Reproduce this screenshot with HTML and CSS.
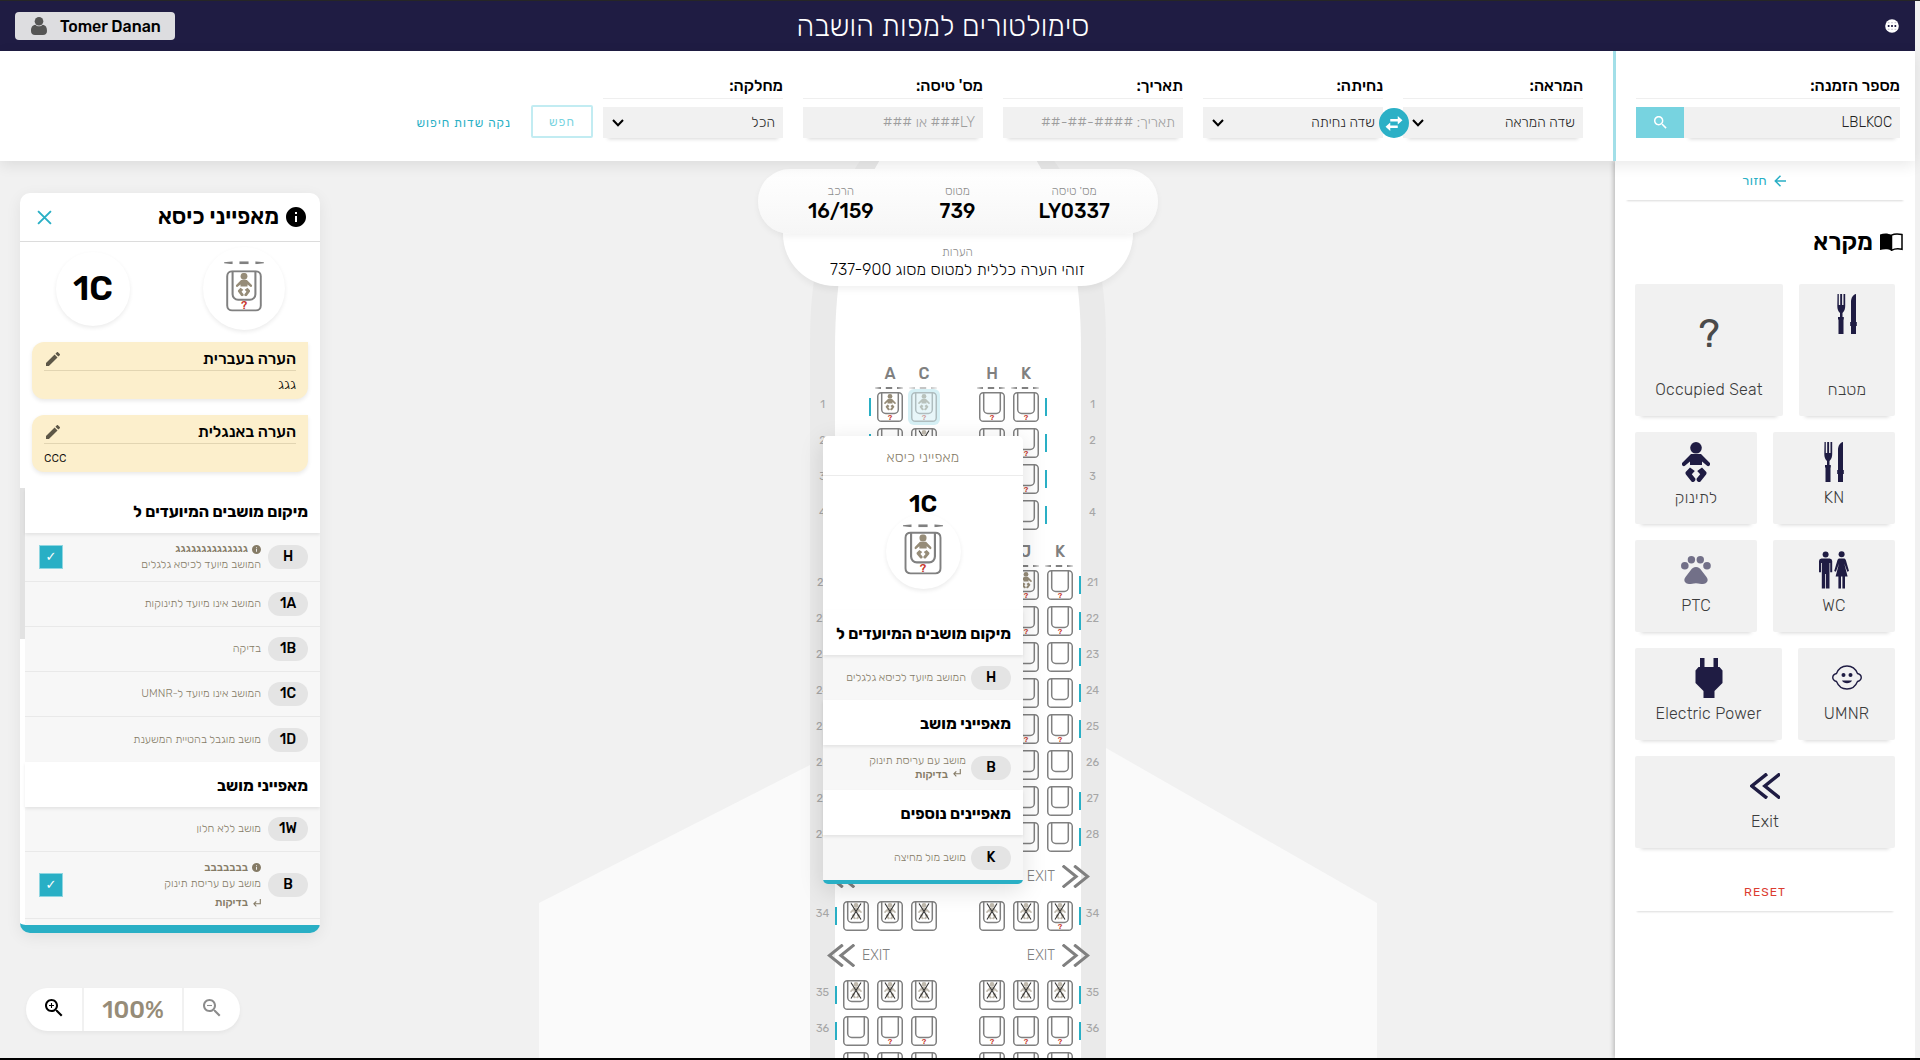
FILE: index.html
```html
<!DOCTYPE html>
<html lang="he" dir="rtl">
<head>
<meta charset="utf-8">
<title>סימולטורים למפות הושבה</title>
<link rel="stylesheet" href="styles.css">
</head>
<body>
<svg class="defs" width="0" height="0">
  <symbol id="i-baby" viewBox="0 0 28 40"><circle cx="14" cy="5.8" r="5.8"/><path d="M9 12h10l8.4 8.6a1.9 1.9 0 0 1-2.6 3L20 19.6V23H8v-3.4l-4.800 4a1.900 1.900 0 0 1-2.600-3z"/><path d="M8 25.500l4.800 3.400-3 3.300 3.500 4.200c.8 1.800-1.500 4.600-3.600 3.300l-5.800-7.300c-.6-1-.6-1.800 0-2.600zM20 25.500l-4.800 3.400 3 3.300-3.500 4.200c-.8 1.800 1.500 4.600 3.600 3.300l5.800-7.300c.6-1 .6-1.800 0-2.600z"/></symbol>
  <symbol id="i-fork" viewBox="0 0 20 40"><path d="M.5 0h1.300v11H3.200V0h1.900v11h1.400V0h1.700v12c0 3-.8 5-2.700 7v4h1.300v2.500H6.500V40h-5V25.500H1V23h2v-4C1.200 17.500.3 15 .3 12zM19 0v28h.8v4H19v8h-5v-8h-.8v-4h.8V8c0-4 2-7.500 5-8z"/></symbol>
  <symbol id="i-wc" viewBox="0 0 30 38"><circle cx="6.600" cy="3.500" r="3"/><path d="M2.800 7.500h7.800A2.600 2.600 0 0 1 13.200 10v11.300h-2V12h-.7v25.500H7V23h-.8v14.500H2.800V12H2v9.300H0V10a2.600 2.600 0 0 1 2.800-2.500z"/><circle cx="22.600" cy="3.300" r="3"/><path d="M20.600 7.500h4c1.200 0 1.900.6 2.300 1.700L30 20l-1.700.7-3-8.200 3.300 13H26v12h-2.600v-12h-1.400v12h-2.600v-12h-2.800l3.400-13-3.100 8.200L15.200 20l3.200-10.800c.4-1.100 1.100-1.700 2.200-1.700z"/></symbol>
  <symbol id="i-paw" viewBox="0 0 30 28"><circle cx="3.800" cy="9.700" r="3.800"/><circle cx="10.400" cy="3.700" r="3.700"/><circle cx="19.300" cy="3.700" r="3.700"/><circle cx="26" cy="9.700" r="3.800"/><path d="M15 11c2.500 0 4 1.500 5.500 3.500l5 6.500c3 4-.5 7-3.500 7-2.500 0-4-.8-7-.8s-4.500.8-7 .8c-3 0-6.500-3-3.500-7l5-6.500C11 12.500 12.500 11 15 11z"/></symbol>
  <symbol id="i-plug" viewBox="0 0 28 40"><path d="M5 0h4.500v9h9V0H23v9h1.500l3 3.500V25L19.500 33v7H8.500v-7L.5 25V12.500L3.500 9H5z"/></symbol>
  <symbol id="i-kid" viewBox="0 0 30 25"><path d="M4.500 8.500C6.500 3.500 10 1 15 1s8.500 2.500 10.500 7.500c5 1.500 5 6.500 0 8C23.500 21.500 20 24 15 24S6.500 21.500 4.500 16.500c-5-1.500-5-6.500 0-8z" fill="none" stroke="currentColor" stroke-width="1.400"/><circle cx="11.500" cy="10" r="2"/><circle cx="18.500" cy="10" r="2"/><path d="M10 15.500h10c-1.500 3.700-8.500 3.700-10 0z"/></symbol>
  <symbol id="i-back" viewBox="0 0 30 26"><path d="M17 .8L1.800 13 17 25.200M30 .8L14.800 13 30 25.200" fill="none" stroke="currentColor" stroke-width="3.400"/></symbol>
  <symbol id="i-fwd" viewBox="0 0 30 26"><path d="M13 .8L28.200 13 13 25.200M0 .8L15.200 13 0 25.200" fill="none" stroke="currentColor" stroke-width="3.400"/></symbol>
  <symbol id="i-info" viewBox="2 2 20 20"><path d="M12 2C6.480 2 2 6.480 2 12s4.480 10 10 10 10-4.480 10-10S17.520 2 12 2zm1 15h-2v-6h2v6zm0-8h-2V7h2v2z"/></symbol>
  <symbol id="i-edit" viewBox="3 3 18 18"><path d="M3 17.250V21h3.750L17.810 9.940l-3.750-3.750L3 17.250zM20.710 7.040c.39-.39.39-1.020 0-1.410l-2.340-2.340c-.39-.39-1.020-.39-1.410 0l-1.830 1.830 3.750 3.750 1.830-1.830z"/></symbol>
  <symbol id="i-lens" viewBox="3 3 18 18"><path d="M15.500 14h-.79l-.28-.27C15.410 12.590 16 11.110 16 9.500 16 5.910 13.090 3 9.500 3S3 5.910 3 9.500 5.910 16 9.500 16c1.610 0 3.090-.59 4.230-1.570l.27.28v.79l5 4.990L20.490 19l-4.990-5zm-6 0C7.010 14 5 11.990 5 9.500S7.010 5 9.500 5 14 7.010 14 9.500 11.990 14 9.500 14z"/></symbol>
  <symbol id="i-caret" viewBox="0 0 12 8"><path d="M1 1l5 5.300L11 1" fill="none" stroke="#000" stroke-width="2"/></symbol>
  <symbol id="i-enter" viewBox="0 0 8 8"><path d="M7.300 0v4.800H1M3.300 2.300L.9 4.800l2.400 2.500" fill="none" stroke="currentColor" stroke-width="1.100"/></symbol>
  <symbol id="i-seat" viewBox="0 0 26 30"><rect x=".75" y=".75" width="24.500" height="28.500" rx="3.600" fill="#fff" stroke="#808080" stroke-width="1.500"/><path d="M4.700 1v16.500a4 4 0 0 0 4 4h8.600a4 4 0 0 0 4-4V1" fill="none" stroke="#808080" stroke-width="1.500"/></symbol>
  <symbol id="i-dashes" viewBox="0 0 28 2" preserveAspectRatio="none"><path d="M0 .7L6 0v2L0 1.300zM10.800 0h6.400v2h-6.400zM22 0l6 .7v.6L22 2z" fill="#808080"/></symbol>
</svg>

<header class="topbar">
  <svg class="globe" viewBox="0 0 15 15"><circle cx="7.500" cy="7.500" r="7.300" fill="#fff"/><path d="M3 7.500h9" stroke="#1f1c43" stroke-width="2" stroke-dasharray="1.800 1.800"/><path d="M3 4h9M3 11h9" stroke="#b9b8c6" stroke-width="1" stroke-dasharray="1.800 1.800"/></svg>
  <h1>סימולטורים למפות הושבה</h1>
  <div class="user" dir="ltr"><svg viewBox="0 0 16 18"><circle cx="8" cy="4.300" r="4.300"/><path d="M4.500 7.800c1.600 2 5.400 2 7 0C15 8.500 16 10.500 16 14c0 2.800-1.500 4-4 4H4c-2.500 0-4-1.200-4-4 0-3.500 1-5.500 4.500-6.200z"/></svg><span>Tomer Danan</span></div>
</header>

<section class="search">
  <div class="order">
    <div class="field"><label>מספר הזמנה:</label>
      <div class="line"><div class="box">LBLKOC</div><button class="go"><svg><use href="#i-lens"/></svg></button></div>
    </div>
  </div>
  <div class="filters">
    <div class="field f180"><label>המראה:</label><div class="box sel">שדה המראה<svg><use href="#i-caret"/></svg></div></div>
    <div class="swap"><svg viewBox="0 0 18 16"><path d="M5 3.200h8V0l5 4.500L13 9V5.800H5zM13 10.200H5V7l-5 4.500L5 16v-3.200h8z"/></svg></div>
    <div class="field f180"><label>נחיתה:</label><div class="box sel">שדה נחיתה<svg><use href="#i-caret"/></svg></div></div>
    <div class="field f180"><label>תאריך:</label><div class="box ph">תאריך: ####-##-##</div></div>
    <div class="field f180"><label>מס' טיסה:</label><div class="box ph">LY### או ###</div></div>
    <div class="field f180"><label>מחלקה:</label><div class="box sel">הכל<svg><use href="#i-caret"/></svg></div></div>
    <button class="find">חפש</button>
    <a class="clear">נקה שדות חיפוש</a>
  </div>
</section>

<main class="stage">
  <svg class="plane" viewBox="0 0 1915 897"><path d="M810 604L539 742V897H810zM1106 587L1377 742V897H1106z" fill="#fafafa"/><path d="M810 897V180C810 80 838 30 867-10H1047C1077 30 1106 80 1106 180V897z" fill="#eaeaea"/><path d="M835 897V190C835 95 852 45 885-10H1031C1064 45 1081 95 1081 190V897z" fill="#fff"/></svg>
  <div class="map" id="map" dir="ltr"></div>

  <div class="flight">
    <div class="caps">
      <div class="fact"><span>מס' טיסה</span><b>LY0337</b></div>
      <div class="fact"><span>מטוס</span><b>739</b></div>
      <div class="fact"><span>הרכב</span><b dir="ltr">16/159</b></div>
    </div>
    <div class="remark"><span>הערות</span><p>זוהי הערה כללית למטוס מסוג 737-900</p></div>
  </div>

  <div class="popup">
    <div class="phead">מאפייני כיסא</div>
    <div class="pseat">
      <b>1C</b>
      <div class="disc"><svg viewBox="-3 -8 32 39"><use href="#i-dashes" x="-1" y="-5" width="28" height="2"/><use href="#i-seat" width="26" height="30"/><use href="#i-baby" class="tan" x="7" y="2" width="12" height="17"/><text x="13" y="28.200">?</text></svg></div>
    </div>
    <h3>מיקום מושבים המיועדים ל</h3>
    <div class="item"><i>H</i><div class="desc">המושב מיועד לכיסא גלגלים</div></div>
    <h3>מאפייני מושב</h3>
    <div class="item"><i>B</i><div class="desc">מושב עם עריסת תינוק<div class="sub"><svg><use href="#i-enter"/></svg>בדיקות</div></div></div>
    <h3>מאפיינים נוספים</h3>
    <div class="item"><i>K</i><div class="desc">מושב מול מחיצה</div></div>
  </div>

  <aside class="legend">
    <div class="return"><svg viewBox="0 0 12 12"><path d="M6.500.8L1.300 6l5.200 5.200M1.300 6H12" fill="none" stroke="currentColor" stroke-width="1.500"/></svg>חזור</div>
    <h2><svg viewBox="0 0 23 18"><path d="M0 1.500C4 0 8 0 11.500 2v15.500C8 15.800 4 15.800 0 17z"/><path d="M11.500 2.200c3-1.600 6.500-1.600 10.500-.6v14.700c-4-.9-7.500-.6-10.500 1z" fill="none" stroke="#000" stroke-width="1.500"/></svg>מקרא</h2>
    <div class="tiles">
      <div class="trow tall"><div class="tile w96"><svg class="fork"><use href="#i-fork"/></svg><span>מטבח</span></div><div class="tile"><em>?</em><span>Occupied Seat</span></div></div>
      <div class="trow"><div class="tile"><svg class="fork"><use href="#i-fork"/></svg><span>KN</span></div><div class="tile"><svg class="baby"><use href="#i-baby"/></svg><span>לתינוק</span></div></div>
      <div class="trow"><div class="tile"><svg class="wc"><use href="#i-wc"/></svg><span>WC</span></div><div class="tile"><svg class="paw"><use href="#i-paw"/></svg><span>PTC</span></div></div>
      <div class="trow"><div class="tile w97"><svg class="kid"><use href="#i-kid"/></svg><span>UMNR</span></div><div class="tile"><svg class="plug"><use href="#i-plug"/></svg><span>Electric Power</span></div></div>
      <div class="trow"><div class="tile"><svg class="exit"><use href="#i-back"/></svg><span>Exit</span></div></div>
    </div>
    <div class="reset">RESET</div>
  </aside>

  <div class="left">
    <section class="panel">
      <div class="ptitle"><svg class="inf"><use href="#i-info"/></svg><h2>מאפייני כיסא</h2><svg class="close" viewBox="0 0 14 14"><path d="M1 1l12 12M13 1L1 13" stroke="#29afc5" stroke-width="1.800"/></svg></div>
      <div class="pair">
        <div class="disc big"><svg viewBox="-3 -8 32 39"><use href="#i-dashes" x="-1.500" y="-6.500" width="29" height="2.200"/><use href="#i-seat" width="26" height="30"/><use href="#i-baby" class="tan" x="7" y="2" width="12" height="17"/><text x="13" y="28.200">?</text></svg></div>
        <div class="disc num">1C</div>
      </div>
      <div class="note"><div class="nt">הערה בעברית<svg><use href="#i-edit"/></svg></div><p>גגג</p></div>
      <div class="note"><div class="nt">הערה באנגלית<svg><use href="#i-edit"/></svg></div><p dir="ltr">ccc</p></div>
      <div class="list">
        <div class="rows">
          <h3>מיקום מושבים המיועדים ל</h3>
          <div class="item r49"><i>H</i><div class="desc"><div class="tag"><svg><use href="#i-info"/></svg>גגגגגגגגגגגגגג</div>המושב מיועד לכיסא גלגלים</div><u>✓</u></div>
          <div class="item"><i>1A</i><div class="desc">המושב אינו מיועד לתינוקות</div></div>
          <div class="item"><i>1B</i><div class="desc">בדיקה</div></div>
          <div class="item"><i>1C</i><div class="desc">המושב אינו מיועד ל-UMNR</div></div>
          <div class="item last"><i>1D</i><div class="desc">מושב מוגבל בהטיית המשענת</div></div>
          <h3>מאפייני מושב</h3>
          <div class="item"><i>1W</i><div class="desc">מושב ללא חלון</div></div>
          <div class="item r67"><i>B</i><div class="desc"><div class="tag"><svg><use href="#i-info"/></svg>בבבבבבב</div>מושב עם עריסת תינוק<div class="sub"><svg><use href="#i-enter"/></svg>בדיקות</div></div><u>✓</u></div>
        </div>
        <div class="thumb"></div>
      </div>
    </section>
    <div class="zoom">
      <div class="zb off"><svg><use href="#i-lens"/><path d="M4 6.500h5" stroke="currentColor" stroke-width="1.100"/></svg></div>
      <div class="zv" dir="ltr">100%</div>
      <div class="zb"><svg><use href="#i-lens"/><path d="M4 6.500h5M6.500 4v5" stroke="currentColor" stroke-width="1.100"/></svg></div>
    </div>
  </div>
</main>
<script src="script.js"></script>
</body>
</html>
```
FILE: styles.css
```css
*{box-sizing:border-box;margin:0;padding:0}
html{background:#f1f1f1}
body{width:1920px;height:1060px;padding-right:5px;border-top:1px solid #262626;border-bottom:2px solid #000;overflow:hidden;display:flex;flex-direction:column;font-family:Rubik,Roboto,"Open Sans","Liberation Sans",sans-serif;font-size:14px;color:#000;background:#f1f1f1}
.defs{display:block;position:absolute}
svg{fill:currentColor;flex:none}
button{font:inherit;border:0}

.topbar{height:50px;background:#1f1c43;display:flex;align-items:center;justify-content:space-between;padding:0 16px 0 15px;flex:none}
.globe{width:14px;height:14px}
.topbar h1{color:#fff;font-weight:300;font-size:29px;line-height:50px;margin-right:174px}
.user{width:160px;height:28px;border-radius:4px;background:#dddde0;display:flex;align-items:center;gap:13px;padding-left:16px;font-size:16px;font-weight:500}
.user svg{width:16px;height:18px;fill:#555}

.search{height:110px;flex:none;background:#fff;display:flex;position:relative;z-index:5;box-shadow:0 4px 14px rgba(0,0,0,.09)}
.order{width:302px;padding:22px 15px 0 20px;border-left:3px solid #a2dfe8}
.field label{display:block;height:26px;line-height:25px;font-size:16px;border-bottom:1px solid #efefef;margin-bottom:8px;font-weight:500}
.line{display:flex}
.line .box{flex:1}
.box{height:31px;background:#f1f1f1;padding:0 8px;line-height:31px;font-weight:300;color:#222;font-size:14px;display:flex;justify-content:space-between;align-items:center;box-shadow:0 6px 4px -5px rgba(0,0,0,.16)}
.box svg{width:12px;height:8px;margin-left:1px}
.ph{color:#9d9d9d}
.go{width:48px;height:31px;background:#77d3e0;color:#fff;display:grid;place-items:center}
.go svg{width:13px;height:13px}
.filters{display:flex;padding:22px 30px 0 0}
.f180{width:180px;margin-left:20px}
.swap{width:30px;height:30px;border-radius:50%;background:#2bb0c6;color:#fff;display:grid;place-items:center;margin:35px -26px 0 -4px;z-index:1}
.swap svg{width:18px;height:15px}
.find{width:62px;height:33px;border:2px solid #c2ecf2;background:#fff;color:#77d3e0;letter-spacing:1px;margin:32px -10px 0 20px;font-size:12px;border-radius:2px}
.clear{color:#29afc5;font-size:12px;letter-spacing:1px;line-height:20px;margin-top:40px}

.stage{flex:1;min-height:0;display:grid;grid-template:897px/1915px;position:relative;overflow:hidden}
.stage>*{grid-area:1/1}
.plane{width:1915px;height:897px}
.map{width:296px;margin-top:194px;justify-self:end;margin-left:810px;display:flex;flex-direction:column}
.cols,.row{display:flex;justify-content:center}
.cols{height:34px;flex:none;align-items:center;font-size:16px;font-weight:500;color:#808080;padding-top:2px}
.cols .grp span{width:26px;text-align:center}
.grp{display:flex;gap:8px}
.aisle{width:42px}
.row{height:36px;flex:none;align-items:center}
.row .no{width:25px;text-align:center;font-size:11px;color:#a6a6a6;line-height:14px;margin-bottom:5px}
.row .no:last-child{padding-right:2px}
.cabin{flex:1;display:flex;justify-content:center;align-items:center}
.win{width:2px;height:18px;background:#29afc5;margin:0 6px 0 0}
.win.r{margin:0 0 0 6px}
.win.none{background:none}
.seat{width:26px;height:30px;overflow:visible;display:block}
.seat.on{opacity:.45}
.pick{background:#d6f0f5;box-shadow:0 0 0 3px #d6f0f5;border-radius:3px}
.tan{color:#968c78;fill:#968c78}
text{fill:#c8372d;font-size:8px;font-weight:500;text-anchor:middle}
.exitrow{height:43px;flex:none;display:flex;align-items:center;justify-content:space-between;padding:0 16px 0 17px;color:#808080;font-size:14px;font-weight:300}
.exitrow span{display:flex;align-items:center;gap:7px}
.exitrow svg{width:28px;height:23px}

.flight{justify-self:center;margin-top:8px;width:400px;position:relative;z-index:3;text-align:center}
.caps{height:65px;border-radius:32px;background:linear-gradient(#fff,#f6f6f6);box-shadow:0 3px 6px rgba(0,0,0,.05);display:flex;position:relative;z-index:1;padding:14px 25px 0}
.fact{width:117px;display:flex;flex-direction:column}
.flight span{font-size:12px;font-weight:300;color:#8c8c8c;line-height:16px}
.fact b{font-size:20px;font-weight:500;line-height:25px}
.remark{width:350px;height:84px;margin:-32px auto 0;background:#fff;border-radius:0 0 52px 52px;padding-top:42px;box-shadow:0 4px 6px rgba(0,0,0,.05)}
.remark span{display:block}
.remark p{font-size:16px;font-weight:300;line-height:19px;letter-spacing:.1px}

h3{height:45px;line-height:47px;font-size:16px;font-weight:700;background:#fff;padding:0 12px;box-shadow:0 2px 3px rgba(0,0,0,.08);position:relative;white-space:nowrap}
.item{height:45px;display:flex;align-items:center;padding:0 12px;background:#f7f7f7;border-bottom:1px solid #e9e9e9}
.item.last{border:0}
.item i{width:40px;height:24px;border-radius:12px;background:#e4e4e4;font-style:normal;font-size:14px;font-weight:500;text-align:center;line-height:24px}
.desc{margin-right:7px;flex:1;font-size:11.2px;font-weight:300;color:#857b66;line-height:15px}
.tag,.sub{font-weight:500;display:flex;align-items:center;gap:4px}
.tag svg{width:9px;height:9px}
.sub{gap:5px}
.sub svg{width:8px;height:8px}
.item u{width:24px;height:24px;background:#29afc5;border:1px solid #8fd6e1;color:#fff;text-decoration:none;text-align:center;line-height:22px;font-size:13px;margin-left:2px;font-family:"DejaVu Sans",sans-serif}

.popup{position:absolute;left:823px;top:275px;width:200px;height:448px;background:#fff;border-radius:5px;border-bottom:4px solid #29afc5;box-shadow:0 6px 24px rgba(0,0,0,.13);z-index:2}
.phead{height:40px;border-bottom:1px solid #ececec;text-align:center;line-height:43px;font-size:14px;font-weight:300;letter-spacing:.25px;color:#857b66}
.pseat{height:134px;display:flex;flex-direction:column;align-items:center}
.pseat b{font-size:24px;line-height:28px;font-weight:600;margin-top:14px;position:relative}
.disc{width:75px;height:75px;border-radius:50%;box-shadow:0 2px 4px rgba(0,0,0,.08);display:grid;place-items:center}
.pseat .disc{margin-top:-4px}
.pseat .disc svg{width:46px;height:56px;margin-bottom:8px}
.popup .item{border:0}
.popup .desc{margin-right:5px;line-height:14px}
.popup .sub{padding-right:5px}
.popup .sub svg{margin-bottom:3px}

.left{justify-self:end;margin:32px 0 0 20px;width:300px;z-index:2;display:flex;flex-direction:column;align-items:flex-end}
.panel{width:300px;height:740px;background:#fff;border-radius:10px;border-bottom:8px solid #29afc5;box-shadow:0 4px 16px rgba(0,0,0,.07);display:flex;flex-direction:column}
.ptitle{height:49px;border-bottom:1px solid #dcdcdc;display:flex;align-items:center;padding:0 14px 0 17px;flex:none}
.ptitle .inf{width:20px;height:20px}
.ptitle h2{font-size:22.400px;font-weight:600;flex:1;margin-right:7px;line-height:46px}
.close{width:15px;height:15px}
.pair{display:flex;justify-content:space-between;align-items:center;padding:0 35px 0 36px;height:93px;flex:none}
.pair .big{width:82px;height:83px}
.big svg{width:44px;height:54px;margin-bottom:6px}
.pair .num{width:74px;height:74px;font-size:34px;font-weight:600}
.note{margin:7px 12px 9px;height:57px;background:#fcefcc;border-radius:12px 0 12px 12px;padding:0 12px;box-shadow:0 2px 4px rgba(0,0,0,.09);flex:none}
.note+.note{margin:7px 12px 16px}
.nt{display:flex;justify-content:space-between;align-items:center;height:29px;padding-top:5px;border-bottom:1px solid #e2d5b2;font-size:16px;font-weight:500}
.nt svg{width:14px;height:14px;margin-left:2px;fill:#5d5747}
.note p{font-size:14px;font-weight:300;line-height:27px}
.list{flex:1;min-height:0;overflow:hidden;display:flex}
.rows{flex:1;background:#f7f7f7}
.thumb{width:5px;height:151px;background:#e2e2e2}
.rows .r49{height:49px}
.rows .r67{height:67px}
.rows .desc{line-height:16px}
.rows .sub{margin-top:3px}
.zoom{width:214px;height:43px;margin:55px 0 0 6px;align-self:flex-end;border-radius:22px;background:#fff;display:flex;box-shadow:0 2px 4px rgba(0,0,0,.05)}
.zb{width:56px;display:grid;place-items:center;padding-bottom:4px}
.zb.off{color:#8c8c8c}
.zb svg{width:18px;height:18px}
.zv{flex:1;border:solid #f1f1f1;border-width:0 2px;text-align:center;font-size:24px;line-height:44px;font-weight:500;color:#968c78}

.legend{width:300px;justify-self:start;z-index:2;background:#fff;box-shadow:-2px 0 4px rgba(0,0,0,.2);display:flex;flex-direction:column}
.return{margin:0 10px;height:39px;display:flex;align-items:center;gap:7px;padding:0 119px 0 0;font-size:13px;letter-spacing:.3px;color:#29afc5;box-shadow:0 3px 2px -2px rgba(0,0,0,.15)}
.return svg{width:12px;height:12px}
.legend h2{margin:24px 12px 0;height:36px;display:flex;align-items:center;gap:7px;font-size:24px;font-weight:600}
.legend h2 svg{width:23px;height:18px}
.tiles{display:flex;flex-direction:column;gap:16px;padding:24px 20px 0}
.trow{display:flex;gap:16px;height:92px}
.tall{height:132px}
.tile{flex:1;background:#f1f1f1;border-radius:2px;display:flex;flex-direction:column;align-items:center;justify-content:space-between;padding:10px 0 16px;color:#1f1c43;box-shadow:0 7px 4px -6px rgba(0,0,0,.16)}
.tile span{font-size:16px;font-weight:300;line-height:20px;color:#3c3c3c;letter-spacing:.2px}
.w96{flex:0 0 96px}
.w97{flex:0 0 97px}
.fork{width:20px;height:40px}
.baby{width:28px;height:40px}
.wc{width:30px;height:38px;margin-top:1px}
.plug{width:28px;height:40px}
.paw{width:30px;height:28px;margin-top:6px;opacity:.6}
.kid{width:30px;height:25px;margin-top:7px}
.exit{width:30px;height:26px;margin-top:7px}
.tall .tile{padding-bottom:16px}
.tile em{font-style:normal;font-size:40px;line-height:40px;color:#4a4a4a;font-weight:400;margin-top:20px}
.reset{margin:28px 20px 0;height:35px;line-height:33px;text-align:center;color:#dc3c30;font-size:12px;letter-spacing:1px;box-shadow:0 3px 2px -2px rgba(0,0,0,.14)}
```
FILE: script.js
```js
// Seat codes: "." plain, "q" question mark, "b" baby + question mark,
// "s" selected baby seat, "x" blocked, "X" blocked + question mark.
const seat = (code, dash) => {
  const baby = 'bsxX'.includes(code);
  const crossed = 'xX'.includes(code);
  const svg = `<svg class="seat ${code === 's' ? 'on' : ''}" viewBox="0 0 26 30">
    ${dash ? '<use href="#i-dashes" x="-2" y="-5" width="28" height="2"/>' : ''}
    <use href="#i-seat" width="26" height="30"/>
    ${baby ? `<use href="#i-baby" class="tan" x="7" y="2" width="12" height="16.500" ${crossed ? 'opacity=".6"' : ''}/>` : ''}
    ${crossed ? '<path d="M8 2.500l10 16M18 2.500l-10 16" stroke="#333" stroke-width="1.100"/>' : ''}
    ${'qbsX'.includes(code) ? '<text x="13" y="28">?</text>' : ''}</svg>`;
  return `<div class="${code === 's' ? 'pick' : ''}">${svg}</div>`;
};
const aisle = '<div class="aisle"></div>';
const group = (codes, dash) => `<div class="grp">${[...codes].map(c => seat(c, dash)).join('')}</div>`;
const row = (no, left, right, opts = {}) => {
  const w = opts.noWin ? ' none' : '';
  return `<div class="row"><div class="no">${no}</div><div class="cabin"><div class="win${w}"></div>${group(left, opts.dash)}
    ${aisle}${group(right, opts.dash)}<div class="win r${w}"></div></div><div class="no">${no}</div></div>`;
};
const cols = (left, right) => {
  const g = s => `<div class="grp">${[...s].map(c => `<span>${c}</span>`).join('')}</div>`;
  return `<div class="cols">${g(left)}${aisle}${g(right)}</div>`;
};
const exit = `<div class="exitrow"><span><svg><use href="#i-back"/></svg>EXIT</span><span>EXIT<svg><use href="#i-fwd"/></svg></span></div>`;

document.getElementById('map').innerHTML = [
  cols('AC', 'HK'),
  row(1, 'bs', 'qq', { dash: true }), row(2, '.x', '.q'), row(3, '..', '.q'), row(4, '..', '..'),
  cols('ABC', 'HJK'),
  row(21, '...', 'qbq', { dash: true }), row(22, '...', 'qqq'), row(23, '...', '...'), row(24, '...', '...'),
  row(25, '...', 'qqq'), row(26, '...', '...', { noWin: true }), row(27, '...', '...'), row(28, '...', '...'),
  exit, row(34, 'xxx', 'xxX'), exit,
  row(35, 'xxx', 'xxx'), row(36, '.qq', 'qqq'), row('', '...', '...', { noWin: true })
].join('');
```
